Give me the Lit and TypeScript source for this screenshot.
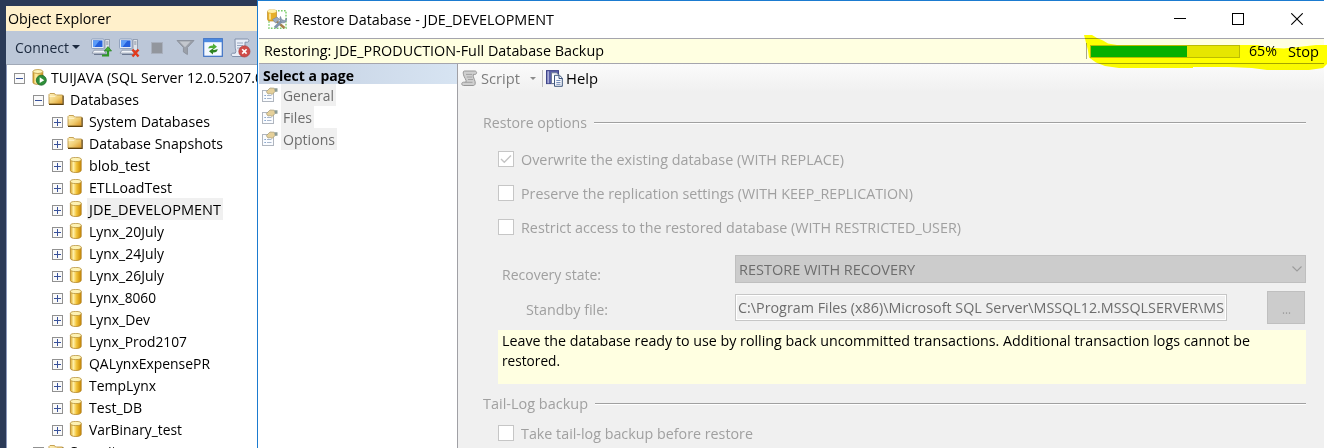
import { LitElement, html, css, svg, nothing } from "lit";
import { customElement, property } from "lit/decorators.js";

/** A single line of text condensed or expanded to an exact advance width. */
@customElement("fit-text")
class FitText extends LitElement {
  @property() text = "";
  @property({ type: Number }) w = 0;
  static styles = css`
    :host { display: block; flex: none; white-space: pre; }
    .line { display: inline-block; transform-origin: 0 50%; }
  `;
  updated() {
    const line = this.renderRoot.querySelector(".line") as HTMLElement;
    line.style.transform = "none";
    const natural = line.getBoundingClientRect().width;
    this.style.width = this.w + "px";
    if (natural) line.style.transform = `translateY(var(--dy, 0px)) scaleX(${this.w / natural})`;
  }
  render() {
    return html`<span class="line">${this.text}</span>`;
  }
}

const t = (text: string, w: number) => html`<fit-text .text=${text} .w=${w}></fit-text>`;

const icon = (w: number, h: number, body: unknown) =>
  html`<svg width=${w} height=${h} viewBox="0 0 ${w} ${h}">${body}</svg>`;

const folder = icon(16, 16, svg`
  <defs><linearGradient id="f" x1="0" y1="0" x2="1" y2="1"><stop offset="0" stop-color="#fff3bd"/><stop offset=".55" stop-color="#f0cd72"/><stop offset="1" stop-color="#d8901c"/></linearGradient></defs>
  <path d="M1 13V3.500L2 2.500h4.500L7.500 4H14.500V13z" fill="url(#f)" stroke="#c09a4a" stroke-width=".9"/>
  <path d="M1.600 5.300h5.600l1-1" stroke="#fff6d0" fill="none"/>
  <path d="M1 13.400h14.200V4.500" stroke="#5d400c" fill="none" stroke-width="1.100"/>`);

const cylinder = icon(16, 16, svg`
  <defs><linearGradient id="c"><stop offset="0" stop-color="#d9a72c"/><stop offset=".28" stop-color="#fff0a8"/><stop offset=".55" stop-color="#f3c53c"/><stop offset="1" stop-color="#c98700"/></linearGradient></defs>
  <path d="M3.400 2.400v11c0 1.200 2.400 2.100 5.400 2.100s5.400-.9 5.400-2.100v-11z" fill="url(#c)" stroke="#b0832a" stroke-width=".8"/>
  <ellipse cx="8.800" cy="2.500" rx="5.400" ry="2.100" fill="#fdf2b4" stroke="#b89238" stroke-width=".8"/>`);

const serverIcon = icon(17, 17, svg`
  <defs><linearGradient id="s"><stop offset="0" stop-color="#d9a72c"/><stop offset=".3" stop-color="#fff0a8"/><stop offset="1" stop-color="#d79a14"/></linearGradient></defs>
  <path d="M2 2.500v11c0 1 2 1.800 4.800 1.800s5-.8 5-1.800v-11z" fill="url(#s)" stroke="#a87a1c" stroke-width=".8"/>
  <ellipse cx="6.900" cy="2.500" rx="4.900" ry="2" fill="#fdf2b4" stroke="#b89238" stroke-width=".8"/>
  <circle cx="10.300" cy="11.200" r="5" fill="#2f8f3a" stroke="#1d6b2a" stroke-width=".8"/>
  <path d="M8.700 8.300l4.500 2.900-4.500 2.900z" fill="#fff"/>`);

const computer = svg`
  <rect x=".5" y="1" width="12.5" height="9.5" rx="1" fill="#e6ecf6" stroke="#8195b5" stroke-width=".8"/>
  <rect x="2" y="2.4" width="9.5" height="6.6" fill="#2460dd"/>
  <path d="M2 2.4h6.5L3.5 9H2z" fill="#5b9bf8"/>
  <path d="M14 1.5h4.5v11H14z" fill="#dfe3ea" stroke="#8590a4" stroke-width=".8"/>
  <path d="M15.2 4h2.2M15.2 6h2.2" stroke="#6a7488" stroke-width=".8"/>
  <path d="M3 12.2h10l2 3H1z" fill="#f0f3f8" stroke="#8590a4" stroke-width=".8"/>
  <path d="M3 16.5h13" stroke="#6b7890"/>`;

const connectIcon = icon(21, 20, svg`${computer}
  <path d="M11 17.5h6V12" stroke="#2f9a26" stroke-width="2.2" fill="none"/><path d="M13.3 13L17 8.6l3.6 4.4z" fill="#46b035" stroke="#1e7a1c" stroke-width=".6"/>`);
const disconnectIcon = icon(21, 20, svg`${computer}
  <path d="M13.5 11.5l6 7M19.5 11.5l-6 7" stroke="#e23a1c" stroke-width="2.4"/>`);
const stopIcon = icon(12, 12, svg`<rect x=".5" y=".5" width="11" height="11" fill="#92969d" stroke="#a9b0bd"/>`);
const filterIcon = icon(19, 17, svg`
  <path d="M1 1.500h17l-6.600 7v7l-4 -2.600V8.500z" fill="#9ba0a9" stroke="#8d939e"/><path d="M3.500 2.500h11L9 8.200" fill="#c3c7ce"/>`);
const refreshIcon = icon(20, 19, svg`
  <rect x=".7" y=".7" width="18.600" height="17.600" fill="#f4f9ff" stroke="#3c71c4" stroke-width="1.200"/>
  <rect x="1" y="1" width="18" height="3.200" fill="#4c8ae0"/>
  <path d="M5.300 10.600c.2-2.300 1.700-3.200 4.700-3.100V5.600l4 3.200-4 3V9.900c-1.700 0-2.400 0-4.700.7z" fill="#4fae38"/>
  <path d="M14.700 11c-.2 2.600-1.700 3.600-4.700 3.500v1.900l-4-3.200 4-3v1.900c1.700 0 2.400-.3 4.700-1.100z" fill="#2e8420"/>`);
const logIcon = icon(21, 20, svg`
  <path d="M5 1h12.500c1.800 0 1.800 3.200 0 3.200H15v11.500c0 2-1 2.800-2.600 2.800H3c-2.200 0-2.400-3.300-.2-3.300h2.400c1.500-2 0-4 0-6z" fill="#e9eef7" stroke="#8290aa"/>
  <path d="M7 5h6M7 7.500h6M7 10h4" stroke="#98a6bf"/>
  <circle cx="14.400" cy="13.400" r="5.600" fill="#d04c48" stroke="#b03b38" stroke-width=".7"/>
  <path d="M12.200 11.200l4.400 4.400M16.600 11.200l-4.400 4.400" stroke="#fff" stroke-width="1.600"/>`);

const restoreIcon = icon(21, 21, svg`
  <rect x="2" y="1.8" width="17" height="17.500" fill="none" stroke="#77cc66" stroke-width="1.400" stroke-dasharray="1.600 1.400"/>
  <rect x=".5" y="1" width="9" height="11" rx="2" fill="#e6af28" stroke="#bd8b25" stroke-width=".7"/>
  <ellipse cx="5" cy="2.300" rx="4.300" ry="1.700" fill="#fff0a4"/><path d="M3 4.500v6" stroke="#fbe494" stroke-width="1.800"/>
  <path d="M8 11L17.500 19" stroke="#a6824c" stroke-width="2.600"/>
  <path d="M5.500 10.500l4.500-2.500 2.500 2.500-4 3.500z" fill="#9eacbf" stroke="#76859a" stroke-width=".6"/>
  <path d="M8 18.800L15 11.500" stroke="#8295ad" stroke-width="3"/>
  <path d="M13.500 7.500l1 3 3 1.200 2-2.500c.6 3-1.400 5-4 4.600-2.200-.5-3.500-3.600-2-6.300z" fill="#8fa1b8" stroke="#687b94" stroke-width=".6"/>`);

const pageIcon = icon(16, 15, svg`
  <rect x=".5" y="3.5" width="11" height="11" fill="#fafcff" stroke="#b0b6bf"/>
  <path d="M2.5 8.5h1.2M2.5 11.5h1.2" stroke="#5d87bd" stroke-width="1.2"/><path d="M5 8.500h4.500M5 11.500h4.500" stroke="#a8b7cc"/>
  <path d="M4.300 4.700L8 1l4.200.2 1.200 3-3.200 3.200-2-.8L6 7z" fill="#e5d09a" stroke="#a49a78" stroke-width=".7"/>
  <path d="M12.500 1.200h3v3.600h-2.500z" fill="#8c9b95"/>`);

const scriptIcon = icon(17, 17, svg`
  <path d="M3.500 1h10.300c2.400 0 2.400 3.400 0 3.400H12.200c-.6 3 2.800 6.800 2 9.400-.3 1.200-1 1.700-2.200 1.700H2.500c-2.300 0-2.300-3.300 0-3.300H5C5.800 9.800 3 7.500 2.500 4.800 2 2.400 2.200 1 3.500 1z" fill="#cfcfcf" stroke="#969696"/>
  <path d="M5 4.400h6M5.800 7h5.400M7 9.500h5M5 12.300h6.500" stroke="#a2a2a2"/>`);

const helpIcon = icon(17, 17, svg`
  <rect x=".5" y=".6" width="12" height="13" fill="#5a60a8" stroke="#3e4488"/><path d="M2.200 1.200v12" stroke="#a8acd8" stroke-width="1.600"/>
  <path d="M5.500 2.800h5l2 2v8.700h-7z" fill="#fff" stroke="#6d7a93"/>
  <path d="M8.500 5.300h5L16.300 8v8.300H8.500z" fill="#f6f8fd" stroke="#3e557c"/>
  <path d="M13 5.500V8.500h3" fill="none" stroke="#3e557c"/><path d="M10.300 10.500h4.200M10.300 12.500h4.200M10.300 14.300h4.200" stroke="#6681b0" stroke-width=".9"/>`);

const expander = (open: boolean) => icon(11, 11, svg`
  <rect x=".5" y=".5" width="10" height="10" fill="#fafafa" stroke="#919191"/>
  <path d=${open ? "M2 5.5h7" : "M2 5.5h7M5.5 2v7"} stroke="#38519b" fill="none"/>`);

type Row = { level: number; label: string; w: number; kind?: "db" | "folder" | "server"; selected?: boolean };
const rows: Row[] = [
  { level: 0, label: "TUIJAVA (SQL Server 12.0.5207.0", w: 212, kind: "server" },
  { level: 1, label: "Databases", w: 69, kind: "folder" },
  { level: 2, label: "System Databases", w: 121, kind: "folder" },
  { level: 2, label: "Database Snapshots", w: 134, kind: "folder" },
  { level: 2, label: "blob_test", w: 61 },
  { level: 2, label: "ETLLoadTest", w: 83 },
  { level: 2, label: "JDE_DEVELOPMENT", w: 132, selected: true },
  { level: 2, label: "Lynx_20July", w: 75 },
  { level: 2, label: "Lynx_24July", w: 75 },
  { level: 2, label: "Lynx_26July", w: 75 },
  { level: 2, label: "Lynx_8060", w: 67 },
  { level: 2, label: "Lynx_Dev", w: 61 },
  { level: 2, label: "Lynx_Prod2107", w: 98 },
  { level: 2, label: "QALynxExpensePR", w: 121 },
  { level: 2, label: "TempLynx", w: 67 },
  { level: 2, label: "Test_DB", w: 53 },
  { level: 2, label: "VarBinary_test", w: 93 },
  { level: 1, label: "Security", w: 54, kind: "folder" },
];

@customElement("object-explorer")
class ObjectExplorer extends LitElement {
  static styles = css`
    :host { display: flex; flex-direction: column; width: 251px; padding: 6px 0 0 6px; background: #2b3a57; overflow: hidden; box-sizing: content-box; }
    svg { display: block; flex: none; }
    .title { height: 25px; line-height: 25px; padding-left: 2px; background: #fff0cb; flex: none; }
    .bar { height: 33px; flex: none; display: flex; align-items: center; padding-left: 9px; background: #bcc7d8; color: #1b293e; border-bottom: 1px solid #a1a9b7; }
    .bar fit-text { --dy: -1px; }
    .arrow { width: 0; height: 0; border: 4px solid transparent; border-top-color: #1b293e; border-bottom: 0; margin: -2px 11px 0 3px; }
    .tree { flex: 1; background: #fff; border-left: 1px solid #8e9bbc; padding-top: 1px; min-height: 0; overflow: hidden; }
    .row { display: flex; height: 22px; align-items: center; }
    .l0 { padding-left: 7px; }
    .l1 { padding-left: 26px; }
    .l2 { padding-left: 45px; }
    .box { margin-top: 3px; }
    .pic { margin: 0 1px 0 4px; }
    .l0 .pic { margin: 1px 0 0 6px; }
    .l2 .pic { margin: 0 0 0 4px; }
    .label { height: 22px; line-height: 22px; padding: 0 2px 0 4px; }
    .l0 .label { padding-left: 3px; }
    .l1 .label { padding-left: 5px; }
    .l2 .label { padding-left: 6px; }
    .l2.selected .label { padding-left: 2px; margin-left: 4px; background: #f0f0f0; }
    .i1 { margin-right: 7px; } .i2 { margin-right: 11px; } .i3 { margin-right: 13px; } .i4 { margin-right: 8px; } .i5 { margin-right: 7px; }
  `;
  render() {
    return html`
      <div class="title">${t("Object Explorer", 103)}</div>
      <div class="bar">
        ${t("Connect", 54)}<span class="arrow"></span>
        <span class="i1">${connectIcon}</span><span class="i2">${disconnectIcon}</span>
        <span class="i3">${stopIcon}</span><span class="i4">${filterIcon}</span>
        <span class="i5">${refreshIcon}</span><span>${logIcon}</span>
      </div>
      <div class="tree">
        ${rows.map((r) => html`
          <div class="row l${r.level} ${r.selected ? "selected" : ""}">
            <span class="box">${expander(r.level < 2 && r.label !== "Security")}</span>
            <span class="pic">${r.kind === "server" ? serverIcon : r.kind === "folder" ? folder : cylinder}</span>
            <span class="label">${t(r.label, r.w)}</span>
          </div>`)}
      </div>`;
  }
}

@customElement("restore-dialog")
class RestoreDialog extends LitElement {
  static styles = css`
    :host { display: flex; flex-direction: column; width: 1066px; border-left: 1px solid #1b7bd0; border-top: 1px solid #1b7bd0; background: #fff; color: #000; position: relative; }
    svg { display: block; flex: none; }
    .title { height: 37px; flex: none; display: flex; align-items: center; padding-left: 9px; --dy: -1px; }
    .title .name { margin: 1px 0 0 5px; flex: 1; }
    .win { margin: 0 22px 1px 0; display: flex; gap: 46px; }
    .win svg:last-child { margin-left: 1px; margin-right: -1px; }
    .status { height: 24px; flex: none; border-top: 1px solid #a5a5ad; border-bottom: 1px solid #a5a5ad; margin-left: 1px; background: #ffffe1; display: flex; align-items: center; padding-left: 5px; padding-right: 5px; --dy: -1px; }
    .msg { flex: 1; }
    .sep { width: 1px; height: 16px; background: #a8a88c; margin-right: 3px; }
    .track { width: 148px; height: 11px; border: 1px solid #bcbcbc; background: #e6e6e6; }
    .fill { height: 100%; background: #06b025; }
    .pct { margin-left: 9px; }
    .stop { margin: 2px 0 0 11px; }
    .main { flex: 1; min-height: 0; display: flex; }
    .pages { width: 198px; flex: none; margin-left: 1px; background: #fff; border-right: 1px solid #a0a0a5; }
    .head { height: 20px; line-height: 22px; font-weight: bold; padding-left: 4px; background: linear-gradient(90deg, #c3cfe1, #d7e4f2); }
    .page { display: flex; height: 22px; color: #6d6d6d; padding-left: 3px; }
    .page svg { margin-top: 3px; }
    .page .label { margin-left: 3px; padding: 0 2px; background: #f0f0f0; line-height: 23px; height: 22px; }
    .form { flex: 1; min-width: 0; background: #f0f0f0; color: #a0a0a0; overflow: hidden; display: flex; flex-direction: column; }
    .tools { height: 28px; flex: none; display: flex; align-items: center; background: linear-gradient(#fbfbfb, #f0f0f0); color: #7c7c7c; padding-left: 3px; }
    .tools .s { margin-left: 3px; }
    .tools .h { margin-left: 3px; color: #000; }
    .tools .arrow { width: 0; height: 0; border: 3px solid transparent; border-top-color: #8c8c8c; border-bottom: 0; margin: 0 6px 0 10px; }
    .tools .v { width: 1px; height: 17px; background: #bdbdbd; margin-right: 3px; }
    .group { display: flex; height: 22px; flex: none; margin: 19px 18px 0 25px; gap: 7px; }
    .group .rule { flex: 1; height: 1px; background: #a0a0a0; border-bottom: 1px solid #fff; margin-top: 11px; }
    .check { display: flex; height: 22px; flex: none; align-items: center; margin: 12px 0 0 40px; gap: 7px; }
    .first { margin-top: 15px; }
    .sq { width: 14px; height: 14px; background: #fff; border: 1px solid #c6c6c6; }
    .field { display: flex; flex: none; }
    .recovery { margin: 17px 0 0 44px; height: 28px; --dy: -1px; }
    .recovery .cap { width: 233px; margin-top: 9px; }
    .combo { width: 564px; height: 26px; border: 1px solid #bfbfbf; background: #ccc; color: #6d6d6d; padding: 0 2px 0 3px; display: flex; align-items: center; justify-content: space-between; --dy: 0px; }
    .standby { margin: 8px 0 0 68px; height: 33px; align-items: flex-start; }
    .standby .cap { width: 209px; margin-top: 8px; --dy: -1px; }
    .input { width: 486px; height: 23px; line-height: 23px; margin-top: 3px; border: 1px solid #c6c6c6; box-shadow: inset 0 0 0 1px #fff; padding: 1px 2px; box-sizing: content-box; height: 23px; color: #6d6d6d; }
    .more { width: 36px; height: 31px; margin-left: 40px; border: 1px solid #bfbfbf; background: #ccc; display: flex; align-items: center; justify-content: center; }
    .note { flex: none; margin: 6px 18px 0 40px; height: 54px; box-sizing: border-box; padding: 0 4px; background: #ffffe1; color: #000; line-height: 20px; }
    .tail { margin-top: 8px; }
    .take { margin-top: 8px; }
    .marker { position: absolute; left: 825px; top: 33px; mix-blend-mode: multiply; }
  `;
  check(label: string, w: number, cls: string, on = false) {
    return html`<div class="check ${cls}">
      <span class="sq">${on ? icon(14, 14, svg`<path d="M2 7l3.300 3.300L12 3.600" fill="none" stroke="#c4c4c4" stroke-width="1.400"/>`) : nothing}</span>${t(label, w)}
    </div>`;
  }
  render() {
    const progress = 65;
    return html`
      <div class="title">
        ${restoreIcon}<span class="name">${t("Restore Database - JDE_DEVELOPMENT", 261)}</span>
        <span class="win">
          ${icon(12, 12, svg`<path d="M0 5.500h12" stroke="#000"/>`)}
          ${icon(12, 12, svg`<rect x=".5" y=".5" width="11" height="11" fill="none" stroke="#000"/>`)}
          ${icon(12, 12, svg`<path d="M.3.3l11.4 11.4M11.700.3L.3 11.700" stroke="#000" stroke-width="1.100"/>`)}
        </span>
      </div>
      <div class="status">
        <span class="msg">${t("Restoring: JDE_PRODUCTION-Full Database Backup", 340)}</span>
        <span class="sep"></span>
        <span class="track"><div class="fill" style="width:${progress}%"></div></span>
        <span class="pct">${t(`${progress}%`, 28)}</span>
        <span class="stop">${t("Stop", 31)}</span>
      </div>
      <div class="main">
        <div class="pages">
          <div class="head">${t("Select a page", 91)}</div>
          ${[["General", 51], ["Files", 29], ["Options", 52]].map(([l, w]) => html`
            <div class="page">${pageIcon}<span class="label">${t(l as string, w as number)}</span></div>`)}
        </div>
        <div class="form">
          <div class="tools">
            ${scriptIcon}<span class="s">${t("Script", 39)}</span><span class="arrow"></span><span class="v"></span>
            ${helpIcon}<span class="h">${t("Help", 32)}</span>
          </div>
          <div class="group">${t("Restore options", 104)}<span class="rule"></span></div>
          ${this.check("Overwrite the existing database (WITH REPLACE)", 323, "first", true)}
          ${this.check("Preserve the replication settings (WITH KEEP_REPLICATION)", 392, "")}
          ${this.check("Restrict access to the restored database (WITH RESTRICTED_USER)", 440, "")}
          <div class="field recovery">
            <span class="cap">${t("Recovery state:", 99)}</span>
            <span class="combo">${t("RESTORE WITH RECOVERY", 176)}
              ${icon(12, 8, svg`<path d="M1.500 1.500L6 6l4.500-4.500" fill="none" stroke="#9c9c9c" stroke-width="1.100"/>`)}</span>
          </div>
          <div class="field standby">
            <span class="cap">${t("Standby file:", 82)}</span>
            <span class="input">${t("C:\\Program Files (x86)\\Microsoft SQL Server\\MSSQL12.MSSQLSERVER\\MS", 486)}</span>
            <span class="more">${t("...", 9)}</span>
          </div>
          <div class="note">
            ${t("Leave the database ready to use by rolling back uncommitted transactions. Additional transaction logs cannot be", 748)}
            ${t("restored.", 58)}
          </div>
          <div class="group tail">${t("Tail-Log backup", 105)}<span class="rule"></span></div>
          ${this.check("Take tail-log backup before restore", 232, "take")}
        </div>
      </div>
      <svg class="marker" width="244" height="38" viewBox="1083 34 244 38">
        <path d="M1084 35h8l5 3 6 2.500 5 3 9 1.500H1258l8 2.500 18 1 14-1.500 18-2h11V64l-4 4-14 2h-42l-15-2-24-1h-35v1h-74l-14-2-9-3.500-7-5-1-7z" fill="#ff0"/>
      </svg>`;
  }
}

@customElement("app-root")
class AppRoot extends LitElement {
  static styles = css`
    :host { display: flex; width: 1327px; height: 448px; overflow: hidden; background: #fff; color: #000; font: 15px/22px "Open Sans", "Noto Sans", sans-serif; }
  `;
  render() {
    return html`<object-explorer></object-explorer><restore-dialog></restore-dialog>`;
  }
}
